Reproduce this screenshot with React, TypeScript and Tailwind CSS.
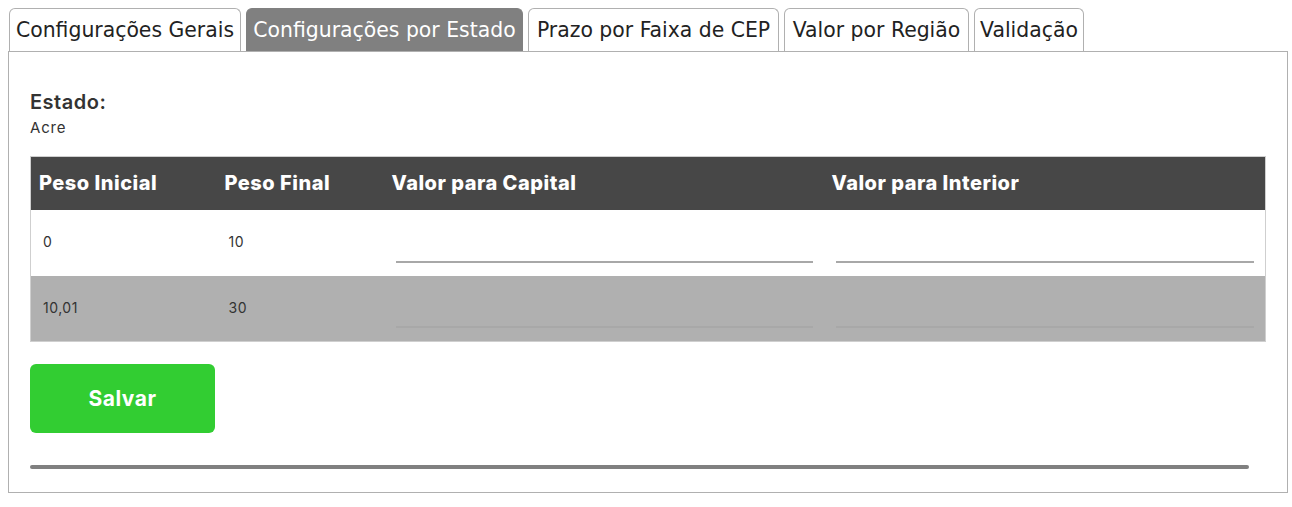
import { useState } from 'react';

const tabs = [
  { label: 'Configurações Gerais', w: 'w-[232px]' },
  { label: 'Configurações por Estado', w: 'w-[277px]' },
  { label: 'Prazo por Faixa de CEP', w: 'w-[251px]' },
  { label: 'Valor por Região', w: 'w-[185px]' },
  { label: 'Validação', w: 'w-[110px]' },
];

const rows = [
  { ini: '0', fim: '10' },
  { ini: '10,01', fim: '30' },
];

export default function App() {
  const [active, setActive] = useState(1);

  return (
    <div className="w-[1292px] h-[507px] bg-white px-2 pt-2 font-['Inter',sans-serif] text-[#333]">
      <div className="flex gap-[5px] pl-px">
        {tabs.map((t, i) => (
          <button
            key={t.label}
            onClick={() => setActive(i)}
            className={`${t.w} h-[43px] pt-px text-center whitespace-nowrap rounded-t-[6px] border border-b-0 font-['DejaVu_Sans',sans-serif] text-[20.4px] ${
              i === active
                ? 'bg-[#808080] border-[#808080] text-white'
                : 'bg-white border-[#b0b0b0] text-[#222]'
            }`}
          >
            {t.label}
          </button>
        ))}
      </div>

      <div className="border border-[#b0b0b0] w-[1280px] h-[442px] px-[21px] pt-[37px]">
        <h3 className="text-[20px] font-semibold tracking-[0.5px] leading-[26px] text-[#333]">Estado:</h3>
        <p className="text-[15px] tracking-[0.8px] leading-[24px] mt-[1px] text-[#333]">Acre</p>

        <table className="mt-[16px] w-[1235px] border border-[#cfcfcf] border-collapse table-fixed">
          <colgroup>
            <col className="w-[186px]" />
            <col className="w-[167px]" />
            <col className="w-[440px]" />
            <col className="w-[442px]" />
          </colgroup>
          <thead>
            <tr className="bg-[#474747] h-[53px] text-white text-left text-[20px] tracking-[0.5px]">
              <th className="px-2 font-extrabold">Peso Inicial</th>
              <th className="px-2 font-extrabold">Peso Final</th>
              <th className="px-2 font-extrabold">Valor para Capital</th>
              <th className="px-2 font-extrabold">Valor para Interior</th>
            </tr>
          </thead>
          <tbody>
            {rows.map((r, i) => (
              <tr key={i} className={`h-[66px] text-[14px] tracking-[0.5px] ${i % 2 ? 'bg-[#b0b0b0]' : 'bg-white'}`}>
                <td className="px-3 pb-[2px]">{r.ini}</td>
                <td className="px-3 pb-[2px]">{r.fim}</td>
                <td className="pl-3 pr-[11px] align-bottom pb-[13px]">
                  <input className="w-full h-[30px] bg-transparent outline-none border-b-2 border-[#a8a8a8]" />
                </td>
                <td className="pl-3 pr-[11px] align-bottom pb-[13px]">
                  <input className="w-full h-[30px] bg-transparent outline-none border-b-2 border-[#a8a8a8]" />
                </td>
              </tr>
            ))}
          </tbody>
        </table>

        <button className="mt-[22px] w-[185px] h-[69px] rounded-[6px] bg-[#32cd32] text-white text-[21px] tracking-[0.5px] font-bold">
          Salvar
        </button>

        <div className="mt-[32px] w-[1219px] h-[4px] rounded-full bg-[#808080]" />
      </div>
    </div>
  );
}
